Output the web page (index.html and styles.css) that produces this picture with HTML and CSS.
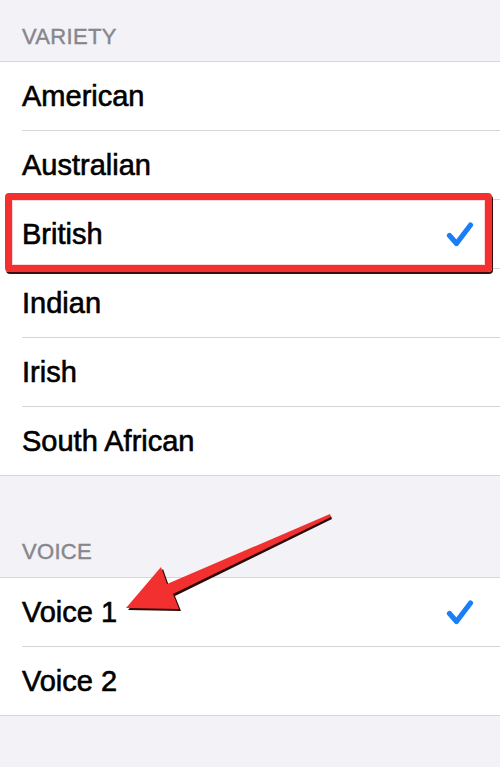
FILE: index.html
```html
<!DOCTYPE html>
<html>
<head>
<meta charset="utf-8">
<link rel="stylesheet" href="styles.css">
</head>
<body>
<div class="page">
  <div class="section-header first">VARIETY</div>
  <ul class="list">
    <li class="row"><div class="cell">American</div></li>
    <li class="row"><div class="cell">Australian</div></li>
    <li class="row"><div class="cell">British<svg class="check" viewBox="0 0 28 27" width="28" height="27"><path d="M3.5 14.5 L10.5 22.5 L24.5 4"/></svg></div></li>
    <li class="row"><div class="cell">Indian</div></li>
    <li class="row"><div class="cell">Irish</div></li>
    <li class="row"><div class="cell">South African</div></li>
  </ul>
  <div class="section-header second">VOICE</div>
  <ul class="list">
    <li class="row"><div class="cell">Voice 1<svg class="check" viewBox="0 0 28 27" width="28" height="27"><path d="M3.5 14.5 L10.5 22.5 L24.5 4"/></svg></div></li>
    <li class="row"><div class="cell">Voice 2</div></li>
  </ul>

  <div class="highlight"></div>
  <svg class="arrow" viewBox="0 0 500 767" width="500" height="767">
    <polygon class="arrow-shadow" points="128,610 163,569 169,586 331,516 332,519 175,596 181,611"/>
    <polygon class="arrow-body" points="126,608 161,567 167,584 330,514 331,517 173,594 179,609"/>
  </svg>
</div>
</body>
</html>
```
FILE: styles.css
```css
html, body {
  margin: 0;
  padding: 0;
}
body {
  background: #f2f2f7;
  font-family: "Liberation Sans", Arial, sans-serif;
  width: 500px;
  height: 767px;
  overflow: hidden;
}
.page {
  position: relative;
  width: 500px;
  height: 767px;
  background: #f2f2f7;
}
.section-header {
  box-sizing: border-box;
  padding-left: 22px;
  font-size: 22px;
  line-height: 22px;
  color: #86868b;
  letter-spacing: 0.3px;
  -webkit-text-stroke: 0.4px #86868b;
}
.section-header.first {
  height: 61px;
  padding-top: 26px;
}
.section-header.second {
  height: 101px;
  padding-top: 65px;
}
.list {
  list-style: none;
  margin: 0;
  padding: 0;
  background: #fff;
  border-top: 1px solid #d6d6da;
  border-bottom: 1px solid #d6d6da;
}
.row {
  padding-left: 22px;
}
.cell {
  display: flex;
  align-items: center;
  justify-content: space-between;
  height: 68px;
  padding-right: 26px;
  border-bottom: 1px solid #d6d6da;
  font-size: 29px;
  color: #000;
  -webkit-text-stroke: 0.6px #000;
}
.row:last-child .cell {
  border-bottom: none;
}
.check {
  display: block;
}
.check path {
  fill: none;
  stroke: #1a7ff6;
  stroke-width: 5.2;
  stroke-linecap: round;
  stroke-linejoin: round;
}
.highlight {
  position: absolute;
  left: 5px;
  top: 193px;
  width: 473px;
  height: 65px;
  border: 7px solid #f2302f;
  border-radius: 4px;
  box-shadow: 1px 2px 0 #3a0e0e, inset 0 0 0 1px #ffd6d6;
}
.arrow {
  position: absolute;
  left: 0;
  top: 0;
  pointer-events: none;
}
.arrow-shadow {
  fill: #2a0a0a;
}
.arrow-body {
  fill: #f2302f;
}
```
